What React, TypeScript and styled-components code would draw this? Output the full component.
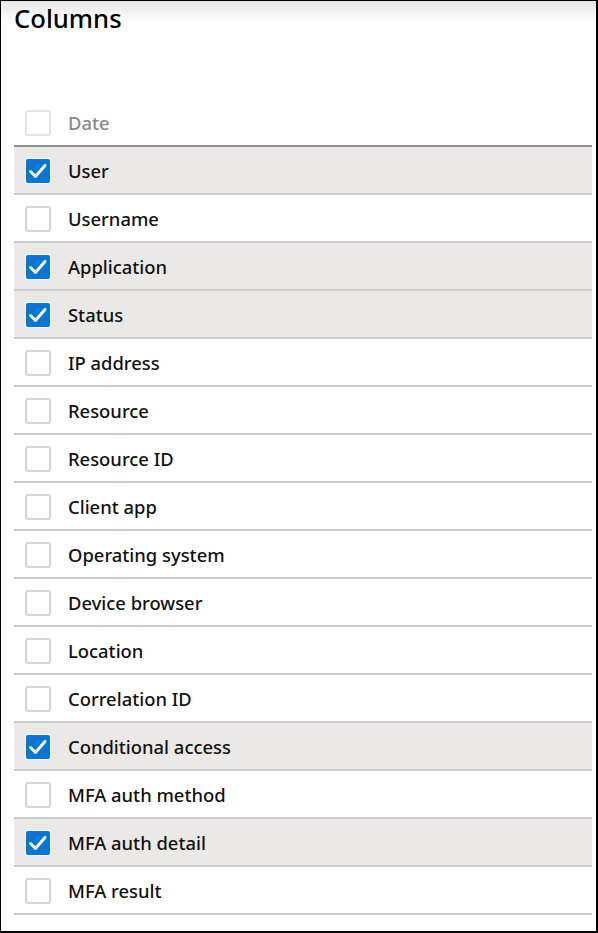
import React, { useState } from "react";
import styled, { createGlobalStyle } from "styled-components";

const Global = createGlobalStyle`
  html, body { margin: 0; padding: 0; background: #fff; }
  body { font-family: "Noto Sans", "Open Sans", sans-serif; }
  * { box-sizing: border-box; }
`;

const Panel = styled.div`
  width: 598px;
  height: 933px;
  border: 1px solid #000;
  border-right-width: 2px;
  border-bottom-width: 2px;
  background: linear-gradient(to bottom, #e6e6e6 0px, #ffffff 22px, #ffffff 100%);
  padding: 0 4px 0 13px;
  display: flex;
  flex-direction: column;
`;

const Title = styled.h1`
  margin: 0;
  padding-top: 1px;
  height: 98px;
  font-size: 25.6px;
  line-height: 34px;
  font-weight: 500;
  color: #000;
`;

const List = styled.div`
  display: flex;
  flex-direction: column;
`;

const Row = styled.label<{ $checked: boolean; $header?: boolean }>`
  display: flex;
  align-items: center;
  height: 48px;
  padding-left: 11px;
  padding-top: 1px;
  gap: 17px;
  background: ${(p) => (p.$checked ? "#ebe9e7" : "#fff")};
  border-bottom: 2px solid ${(p) => (p.$header ? "#8e8e8e" : "#cccccc")};
  cursor: ${(p) => (p.$header ? "default" : "pointer")};
`;

const Box = styled.span<{ $checked: boolean; $disabled?: boolean }>`
  width: 26px;
  height: 26px;
  flex: none;
  border-radius: 3px;
  display: flex;
  align-items: center;
  justify-content: center;
  background: ${(p) => (p.$checked ? "#0078d4" : "#fff")};
  border: ${(p) =>
    p.$checked ? "1px solid #ffffff" : `2px solid ${p.$disabled ? "#e3e3e3" : "#d5d5d5"}`};
`;

const Label = styled.span<{ $disabled?: boolean }>`
  font-size: 18.4px;
  line-height: 24px;
  font-weight: 500;
  color: ${(p) => (p.$disabled ? "#8a8a8a" : "#111")};
`;

const Check = () => (
  <svg width="24" height="24" viewBox="0 0 24 24" fill="none">
    <path d="M4.5 12.5 L9.5 17.5 L19 6.5" stroke="#fff" strokeWidth="3" strokeLinecap="round" strokeLinejoin="round" />
  </svg>
);

const initial: [string, boolean][] = [
  ["User", true],
  ["Username", false],
  ["Application", true],
  ["Status", true],
  ["IP address", false],
  ["Resource", false],
  ["Resource ID", false],
  ["Client app", false],
  ["Operating system", false],
  ["Device browser", false],
  ["Location", false],
  ["Correlation ID", false],
  ["Conditional access", true],
  ["MFA auth method", false],
  ["MFA auth detail", true],
  ["MFA result", false],
];

export default function App() {
  const [items, setItems] = useState(initial);
  const toggle = (i: number) =>
    setItems((prev) => prev.map((it, j) => (j === i ? [it[0], !it[1]] : it)));
  return (
    <>
      <Global />
      <Panel>
        <Title>Columns</Title>
        <List>
          <Row $checked={false} $header>
            <Box $checked={false} $disabled />
            <Label $disabled>Date</Label>
          </Row>
          {items.map(([name, checked], i) => (
            <Row key={name} $checked={checked} onClick={() => toggle(i)}>
              <Box $checked={checked}>{checked && <Check />}</Box>
              <Label>{name}</Label>
            </Row>
          ))}
        </List>
      </Panel>
    </>
  );
}
